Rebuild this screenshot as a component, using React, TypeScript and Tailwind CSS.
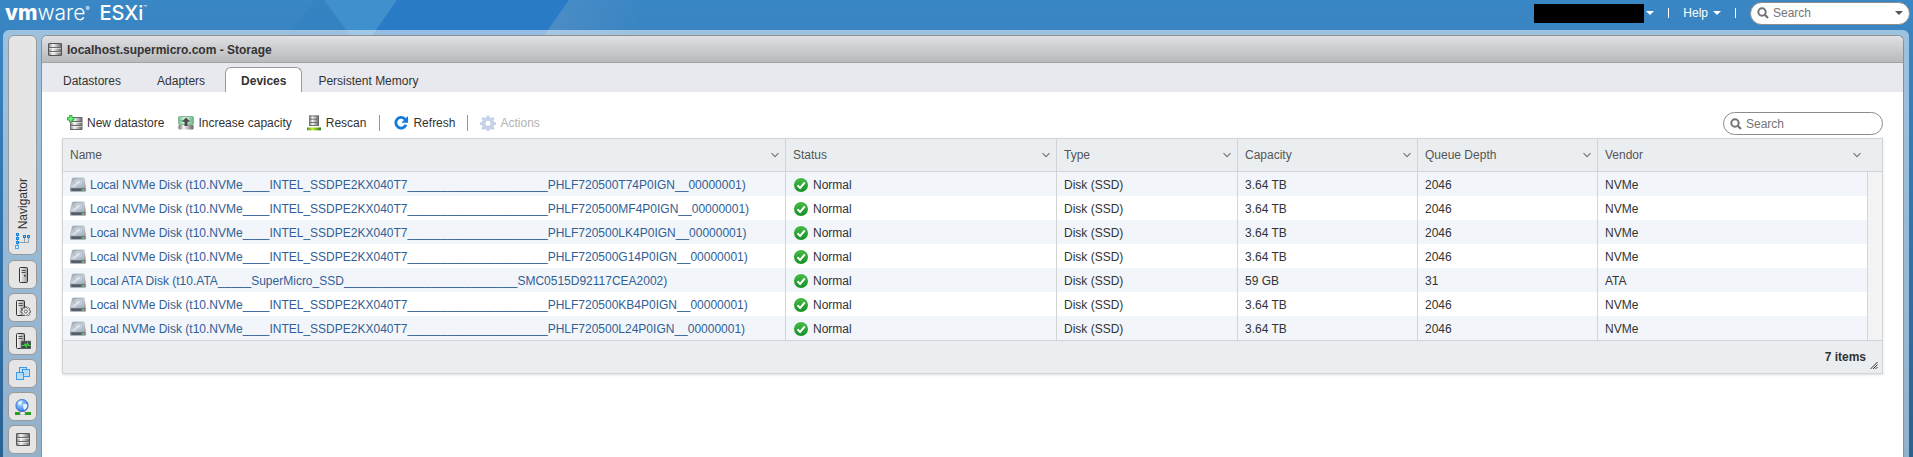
import React from "react";

type Disk = {
  name: string;
  status: string;
  type: string;
  capacity: string;
  queueDepth: string;
  vendor: string;
};

const nvme = (serial: string): Disk => ({
  name: `Local NVMe Disk (t10.NVMe${"_".repeat(4)}INTEL_SSDPE2KX040T7${"_".repeat(21)}${serial}__00000001)`,
  status: "Normal",
  type: "Disk (SSD)",
  capacity: "3.64 TB",
  queueDepth: "2046",
  vendor: "NVMe",
});

const disks: Disk[] = [
  nvme("PHLF720500T74P0IGN"),
  nvme("PHLF720500MF4P0IGN"),
  nvme("PHLF720500LK4P0IGN"),
  nvme("PHLF720500G14P0IGN"),
  {
    name: `Local ATA Disk (t10.ATA${"_".repeat(5)}SuperMicro_SSD${"_".repeat(26)}SMC0515D92117CEA2002)`,
    status: "Normal",
    type: "Disk (SSD)",
    capacity: "59 GB",
    queueDepth: "31",
    vendor: "ATA",
  },
  nvme("PHLF720500KB4P0IGN"),
  nvme("PHLF720500L24P0IGN"),
];

const columns = ["Name", "Status", "Type", "Capacity", "Queue Depth", "Vendor"];

function Gradients() {
  return (
    <svg className="absolute size-0" aria-hidden="true">
      <defs>
        <linearGradient id="metal" x1="0" x2="1" y1="0" y2="0">
          <stop offset="0" stopColor="#6e6e6e" />
          <stop offset="0.35" stopColor="#f6f6f6" />
          <stop offset="1" stopColor="#5e5e5e" />
        </linearGradient>
        <linearGradient id="green" x1="0" x2="1" y1="0" y2="0">
          <stop offset="0" stopColor="#6fbf8a" />
          <stop offset="0.45" stopColor="#e4f8e9" />
          <stop offset="1" stopColor="#62b27e" />
        </linearGradient>
        <linearGradient id="lime" x1="0" x2="1" y1="0" y2="0">
          <stop offset="0" stopColor="#4a9a10" />
          <stop offset="0.4" stopColor="#c6e83a" />
          <stop offset="1" stopColor="#1d7a10" />
        </linearGradient>
        <linearGradient id="drive" x1="0" x2="1" y1="0" y2="1">
          <stop offset="0" stopColor="#98a3ae" />
          <stop offset="0.5" stopColor="#cfd8df" />
          <stop offset="1" stopColor="#98a3ae" />
        </linearGradient>
        <linearGradient id="ok" x1="0" x2="0" y1="0" y2="1">
          <stop offset="0" stopColor="#46bd48" />
          <stop offset="1" stopColor="#129023" />
        </linearGradient>
        <linearGradient id="tower" x1="0" x2="1" y1="0" y2="0">
          <stop offset="0" stopColor="#fafafa" />
          <stop offset="1" stopColor="#9c9c9c" />
        </linearGradient>
        <linearGradient id="fade" x1="0" x2="1" y1="0" y2="0">
          <stop offset="0" stopColor="#4c8dc6" />
          <stop offset="1" stopColor="#4c8dc6" stopOpacity="0" />
        </linearGradient>
        <radialGradient id="globe" cx="0.4" cy="0.35" r="0.7">
          <stop offset="0" stopColor="#b9dcff" />
          <stop offset="0.6" stopColor="#5a9cf0" />
          <stop offset="1" stopColor="#2c62c8" />
        </radialGradient>
      </defs>
    </svg>
  );
}

function Facets() {
  return (
    <svg className="absolute left-0 top-0 h-9 w-[640px]" viewBox="0 0 640 36" aria-hidden="true">
      <path d="M315 0h9l27 36h-63z" fill="#2f7fbf" fillOpacity="0.500" />
      <path d="M324 0h73l-25 36h-21z" fill="#4190ce" />
      <path d="M397 0h172l-25 36H372z" fill="#2a7bc6" />
      <path d="M569 0h71v36h-96z" fill="url(#fade)" />
    </svg>
  );
}

function Icon({ children }: { children: React.ReactNode }) {
  return (
    <svg className="size-4 shrink-0" viewBox="0 0 16 16" aria-hidden="true">
      {children}
    </svg>
  );
}

const StackIcon = () => (
  <Icon>
    <rect x="1" y="1" width="14" height="13" rx="1" fill="url(#metal)" />
    <path d="M2 1.500h12M2 13.500h12" stroke="#555" />
    <path d="M1 5.500h14M1 9.500h14" stroke="#6a6a6a" />
    <path d="M2 6.500h12M2 10.500h12" stroke="#fff" strokeOpacity="0.5" />
    <path d="M1.500 2v11M14.500 2v11" stroke="#555" />
  </Icon>
);

const NewDatastoreIcon = () => (
  <Icon>
    <rect x="3" y="2" width="12.500" height="13" rx="1" fill="url(#metal)" />
    <path d="M3 2.500h12M3 14.500h12M3 6.500h12M3 10.500h12" stroke="#666" />
    <path d="M4 7.500h11M4 11.500h11" stroke="#fff" strokeOpacity="0.5" />
    <path d="M2.500 0.500h2.500v2h2v2.500H5v2H2.500V5H0.500V2.500h2z" fill="#6df07a" stroke="#27a035" strokeWidth="0.900" />
  </Icon>
);

const IncreaseIcon = () => (
  <Icon>
    <rect x="0.500" y="1.500" width="15" height="8" rx="1" fill="url(#green)" stroke="#7fb893" />
    <path d="M1 5.500h14" stroke="#7fb893" />
    <rect x="0.500" y="10" width="15" height="4.500" rx="1" fill="url(#metal)" />
    <path d="M8 2.500 12 6.700H9.500V11h-3V6.700H4z" fill="#4a4a4a" />
  </Icon>
);

const RescanIcon = () => (
  <Icon>
    <rect x="3" y="0.500" width="10" height="10.500" rx="0.500" fill="url(#metal)" />
    <path d="M3 1h10M3 4.200h10M3 7.500h10M3 10.500h10" stroke="#666" strokeWidth="0.900" />
    <rect x="1" y="12.500" width="14" height="2.800" fill="url(#lime)" />
  </Icon>
);

const RefreshIcon = () => (
  <Icon>
    <path d="M12.300 4.500A5.300 5.300 0 1 0 13 9.800" fill="none" stroke="#1279dd" strokeWidth="2.800" />
    <path d="M15 1v6.700H8.300z" fill="#1279dd" />
  </Icon>
);

const GEAR =
  "M6.700 0.500h2.600l.4 2 1.300.6 1.800-1.200 1.800 1.900-1.200 1.700.6 1.400 2 .3v2.600l-2 .4-.6 1.300 1.200 1.800-1.800 1.800-1.800-1.200-1.300.6-.4 2H6.700l-.4-2-1.300-.6-1.800 1.200-1.800-1.800 1.200-1.800L2 10.200l-2-.4V7.200l2-.3.6-1.400L1.400 3.800 3.200 1.900 5 3.100l1.300-.6z";

const GearIcon = () => (
  <Icon>
    <path d={GEAR} fill="#c6d2e8" />
    <circle cx="8" cy="8.300" r="2.500" fill="#fff" />
  </Icon>
);

const DriveIcon = () => (
  <Icon>
    <path d="M2.500 1h11.500l1.700 10H0.300z" fill="url(#drive)" stroke="#97a2ad" strokeWidth="0.600" />
    <ellipse cx="8.500" cy="5.300" rx="4.500" ry="3.600" fill="#c3cdd6" stroke="#aab5bf" strokeWidth="0.700" />
    <path d="M4 9 8 5.500" stroke="#e9eef2" strokeWidth="1.200" />
    <circle cx="8.500" cy="5.200" r="1.200" fill="#e3e9ee" />
    <rect x="0.300" y="11" width="15.400" height="3.600" rx="0.500" fill="#6a7480" />
    <path d="M2 13h9" stroke="#3f4852" />
    <rect x="12.500" y="12" width="1.700" height="1.700" fill="#7ddc3c" />
  </Icon>
);

const OkIcon = () => (
  <Icon>
    <circle cx="8" cy="8" r="7" fill="url(#ok)" />
    <path d="m4.500 8.200 2.600 2.700 4.700-5.600" fill="none" stroke="#fff" strokeWidth="2" />
  </Icon>
);

const TowerShape = ({ x = 0 }: { x?: number }) => (
  <g transform={`translate(${x} 0)`}>
    <rect x="0.500" y="0.500" width="8" height="15" rx="1" fill="url(#tower)" stroke="#333" />
    <path d="M2.500 3.500h4M2.500 5.500h4" stroke="#555" />
    <rect x="5" y="8" width="1.500" height="1.500" fill="#333" />
  </g>
);

const HostIcon = () => (
  <Icon>
    <TowerShape x={4} />
  </Icon>
);

const ManageIcon = () => (
  <Icon>
    <TowerShape x={1} />
    <g transform="translate(6 6.500) scale(0.600)">
      <path d={GEAR} fill="#e4e4e4" stroke="#555" strokeWidth="1.500" />
      <circle cx="8" cy="8.300" r="2.400" fill="#fff" stroke="#555" strokeWidth="1.500" />
    </g>
  </Icon>
);

const MonitorIcon = () => (
  <Icon>
    <TowerShape x={1} />
    <rect x="6" y="8" width="10" height="8" fill="#3f4449" stroke="#8a8a8a" strokeWidth="0.600" />
    <path d="M6.500 12.500h2.500l1-1.500 1.200 3 1.300-4 1 2.500h2" fill="none" stroke="#3fe03f" strokeWidth="1.100" />
  </Icon>
);

const VmIcon = () => (
  <Icon>
    <g stroke="#3c9be8" fill="#b9defa" fillOpacity="0.850">
      <rect x="4.500" y="1.500" width="7" height="7" />
      <rect x="7.500" y="3.500" width="7" height="7" />
      <rect x="1.500" y="6.500" width="7" height="7" />
    </g>
  </Icon>
);

const NetworkIcon = () => (
  <Icon>
    <rect x="0" y="13" width="16" height="3" fill="#23a023" />
    <rect x="5" y="12.500" width="5" height="3.500" rx="1" fill="#f4f4f4" stroke="#999" strokeWidth="0.600" />
    <circle cx="7" cy="6.500" r="6.200" fill="url(#globe)" stroke="#3b6cc9" strokeWidth="0.700" />
    <path d="M3 4c1-2 3-2.500 4-2 .5 1.500-1 2-1.500 3.500S3.500 6.500 3 4zM8.500 5c2-1.500 3.500 0 4 1.500-.5 2.500-2 4-3.500 4.500-.5-2-1.500-4-.5-6z" fill="#e4f2ff" />
  </Icon>
);

const NavIcon = () => (
  <Icon>
    <path d="M2.500 12V2M3 9.500h10.500V4M9.500 4v5.500" fill="none" stroke="#8fa0b0" />
    <g fill="#7cc0f5" stroke="#1b82d6">
      <rect x="1.500" y="0.500" width="2" height="2" />
      <rect x="1.500" y="4.500" width="2" height="2" />
      <rect x="1.500" y="8.500" width="2" height="2" />
      <rect x="8.500" y="2.500" width="2" height="2" />
      <rect x="12.500" y="2.500" width="2" height="2" />
    </g>
    <rect x="0.500" y="12.500" width="3" height="3" fill="#d8eefc" stroke="#4aa8ee" />
  </Icon>
);

const SearchIcon = () => (
  <svg className="size-3 shrink-0" viewBox="0 0 12 12" aria-hidden="true">
    <circle cx="5" cy="5" r="3.700" fill="none" stroke="#737373" strokeWidth="2" />
    <path d="m7.800 7.800 3.200 3.200" stroke="#737373" strokeWidth="2.200" />
  </svg>
);

const Caret = ({ className }: { className: string }) => (
  <svg className={`h-1 w-2 shrink-0 ${className}`} viewBox="0 0 8 4" aria-hidden="true">
    <path d="M0 0h8L4 4z" fill="currentColor" />
  </svg>
);

const Chevron = () => (
  <svg className="size-2 shrink-0" viewBox="0 0 8 8" aria-hidden="true">
    <path d="m0.500 2.200 3.500 3.500 3.500-3.500" fill="none" stroke="#777" strokeWidth="1.200" />
  </svg>
);

function SearchBox({ label, children }: { label: string; children?: React.ReactNode }) {
  return (
    <div className="flex h-[23px] w-40 items-center gap-1 rounded-full border border-[#8c8c8c] bg-white px-1.5">
      <SearchIcon />
      <input
        type="search"
        aria-label={label}
        placeholder="Search"
        className="min-w-0 flex-1 bg-transparent text-xs text-[#333] outline-none placeholder:text-[#757575]"
      />
      {children}
    </div>
  );
}

function TopBar() {
  return (
    <header className="flex h-[30px] items-start justify-between pl-[5px] pr-[3px]">
      <Facets />
      <div className="relative flex h-[26px] items-center gap-2.5 font-[Inter,sans-serif] text-white">
        <div className="flex items-start text-[21px] leading-[22px]">
          <span className="font-extrabold">vm</span>
          <span className="font-light">ware</span>
          <span className="text-[6px] leading-[14px]">®</span>
        </div>
        <div className="flex items-start text-[20px] leading-[22px]">
          <span className="font-medium">ESXi</span>
          <span className="text-[6px] leading-[12px]">™</span>
        </div>
      </div>
      <div className="relative flex h-[26px] items-center text-xs text-white">
        <button type="button" aria-label="User menu" className="flex items-center gap-0.5">
          <span className="h-[19px] w-[110px] bg-black" />
          <Caret className="text-white" />
        </button>
        <span className="ml-3.5 h-2.5 w-px bg-white" />
        <button type="button" className="ml-3.5 flex items-center gap-[5px] font-medium">
          Help
          <Caret className="text-white" />
        </button>
        <span className="mx-3.5 h-2.5 w-px bg-white" />
        <SearchBox label="Search inventory">
          <Caret className="text-[#555]" />
        </SearchBox>
      </div>
    </header>
  );
}

const navButtons = [
  { label: "Host", icon: <HostIcon /> },
  { label: "Manage", icon: <ManageIcon /> },
  { label: "Monitor", icon: <MonitorIcon /> },
  { label: "Virtual Machines", icon: <VmIcon /> },
  { label: "Networking", icon: <NetworkIcon /> },
  { label: "Storage", icon: <StackIcon /> },
];

function NavigatorRail() {
  return (
    <nav className="flex w-[29px] shrink-0 flex-col gap-1">
      <button
        type="button"
        className="mb-px flex h-[220px] flex-col items-center justify-end gap-1 rounded-md border border-[#999] bg-[#e5e5e5] pb-[5px] text-xs text-[#333]"
      >
        <span className="rotate-180 [writing-mode:vertical-rl]">Navigator</span>
        <NavIcon />
      </button>
      {navButtons.map((b) => (
        <button
          key={b.label}
          type="button"
          aria-label={b.label}
          className="flex h-[29px] items-center justify-center rounded-md border border-[#999] bg-[#e5e5e5]"
        >
          {b.icon}
        </button>
      ))}
    </nav>
  );
}

function Tabs() {
  const inactive = "mr-1 h-[25px] px-4 pt-0.5";
  return (
    <div role="tablist" className="flex h-[29px] items-end bg-[#e8e9ee] pl-[5px] text-xs text-[#333]">
      <button type="button" role="tab" aria-selected="false" className={inactive}>Datastores</button>
      <button type="button" role="tab" aria-selected="false" className={inactive}>Adapters</button>
      <button
        type="button"
        role="tab"
        aria-selected="true"
        className="h-[25px] rounded-t-md border border-b-0 border-[#999] bg-white px-[15px] pt-px font-bold"
      >
        Devices
      </button>
      <button type="button" role="tab" aria-selected="false" className={inactive}>Persistent Memory</button>
    </div>
  );
}

function Toolbar() {
  const item = "flex items-center gap-1";
  return (
    <div className="flex h-[26px] items-start justify-between">
      <div className="flex h-[22px] items-center pl-[5px] text-xs text-[#333]">
        <button type="button" className={item}><NewDatastoreIcon />New datastore</button>
        <button type="button" className={`ml-3.5 ${item}`}><IncreaseIcon />Increase capacity</button>
        <button type="button" className={`ml-3.5 ${item}`}><RescanIcon />Rescan</button>
        <span className="mx-[13px] h-4 w-px bg-[#999]" />
        <button type="button" className={item}><RefreshIcon />Refresh</button>
        <span className="mx-3 h-4 w-px bg-[#999]" />
        <button type="button" disabled className={`text-[#b3b3b3] ${item}`}><GearIcon />Actions</button>
      </div>
      <SearchBox label="Search devices" />
    </div>
  );
}

function DeviceTable() {
  const cell = "border-l border-[#d2d5d8] pl-[7px] pt-0.5";
  return (
    <div className="border border-[#d2d5d8] shadow-sm">
      <table className="w-full table-fixed border-separate border-spacing-0 text-left text-xs text-[#333]">
        <colgroup>
          <col />
          <col className="w-[271px]" />
          <col className="w-[181px]" />
          <col className="w-[180px]" />
          <col className="w-[180px]" />
          <col className="w-[270px]" />
          <col className="w-[15px]" />
        </colgroup>
        <thead>
          <tr className="h-[33px] bg-[#eaeef1] text-[#555]">
            {columns.map((c, i) => (
              <th
                key={c}
                scope="col"
                className={`border-b border-[#d2d5d8] pr-1.5 font-normal ${i === 0 ? "pl-[7px]" : "border-l pl-[7px]"}`}
              >
                <div className="flex items-center justify-between">
                  {c}
                  <button type="button" aria-label={`${c} column options`}>
                    <Chevron />
                  </button>
                </div>
              </th>
            ))}
            <td className="border-b border-[#d2d5d8]" />
          </tr>
        </thead>
        <tbody>
          {disks.map((d, i) => (
            <tr key={d.name} className="h-6 odd:bg-[#f2f6fb] even:bg-white">
              <td className="overflow-hidden whitespace-nowrap pl-[7px] pt-0.5">
                <a href="#device" className="flex items-center gap-1 text-[#315e94]">
                  <DriveIcon />
                  {d.name}
                </a>
              </td>
              <td className={cell}>
                <span className="flex items-center gap-1">
                  <OkIcon />
                  {d.status}
                </span>
              </td>
              <td className={cell}>{d.type}</td>
              <td className={cell}>{d.capacity}</td>
              <td className={cell}>{d.queueDepth}</td>
              <td className={cell}>{d.vendor}</td>
              {i === 0 && <td rowSpan={disks.length} className="border-l border-[#d2d5d8] bg-[#f3f3f3]" />}
            </tr>
          ))}
        </tbody>
      </table>
      <div className="flex h-[33px] items-center justify-end gap-1 border-t border-[#d2d5d8] bg-[#eaeef1] pr-1 text-xs font-bold text-[#333]">
        7 items
        <svg className="mb-1 size-2 self-end" viewBox="0 0 8 8" aria-hidden="true">
          <path d="M0.500 8 7.500 1M3 8l4.500-4.500M5.500 8l2-2" stroke="#333" />
        </svg>
      </div>
    </div>
  );
}

export default function App() {
  return (
    <div className="relative flex min-h-screen flex-col bg-linear-to-b from-[#3a87c5] to-[#296294] font-['Liberation_Sans',Arial,sans-serif]">
      <Gradients />
      <TopBar />
      <div className="relative ml-[3px] mr-1 flex flex-1 gap-1 rounded-t-md bg-white/50 px-[5px] pt-[5px]">
        <NavigatorRail />
        <main className="flex min-w-0 flex-1 flex-col rounded-t-md border border-b-0 border-[#8f8f8f] bg-white">
          <div className="flex h-[27px] items-center gap-1 rounded-t-md border-b border-[#a3a3a3] bg-linear-to-b from-[#e0e1e4] to-[#b8b9bb] pl-[5px] pt-px">
            <StackIcon />
            <h1 className="text-xs font-bold text-[#333]">localhost.supermicro.com - Storage</h1>
          </div>
          <Tabs />
          <div className="flex flex-col px-5 pt-5">
            <Toolbar />
            <DeviceTable />
          </div>
        </main>
      </div>
    </div>
  );
}
